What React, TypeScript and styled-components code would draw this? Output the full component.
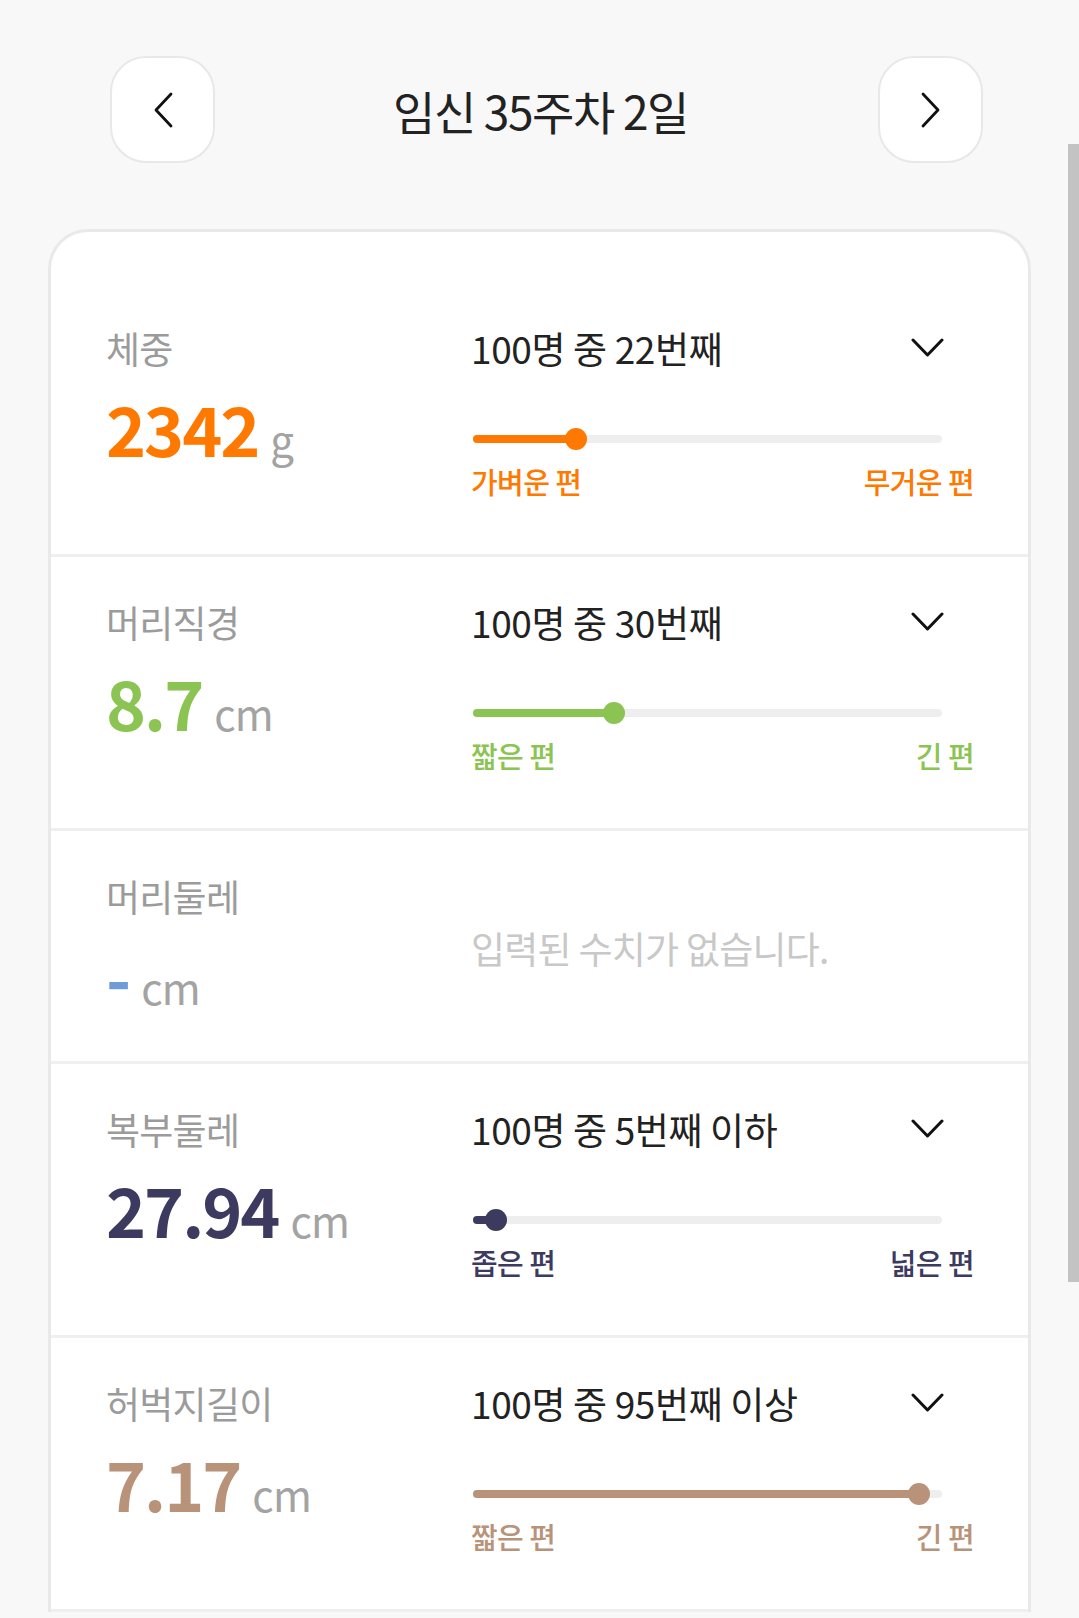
import React from 'react';
import styled, { createGlobalStyle } from 'styled-components';

const GlobalStyle = createGlobalStyle`
  html, body {
    margin: 0;
    padding: 0;
    overflow: hidden;
    background-color: #f8f8f8;
  }
  body {
    font-family: "Noto Sans CJK KR", "Noto Sans", sans-serif;
    color: #222;
  }
  * {
    box-sizing: border-box;
  }
`;

const Page = styled.div`
  min-height: 100vh;
  background-color: #f8f8f8;
  padding-top: 56px;
`;

const Header = styled.header`
  display: grid;
  grid-template-columns: 105px 1fr 105px;
  align-items: center;
  padding: 0 96px 0 110px;
`;

const NavButton = styled.button`
  width: 105px;
  height: 107px;
  border: 2px solid #e8e8e8;
  border-radius: 36px;
  background-color: #fff;
  display: flex;
  align-items: center;
  justify-content: center;
  padding: 0;
  cursor: pointer;
`;

const Title = styled.h1`
  margin: 0;
  padding-right: 12px;
  text-align: center;
  font-size: 46px;
  font-weight: 400;
  letter-spacing: -0.03em;
  line-height: 60px;
  color: #222;
`;

const Card = styled.section`
  margin: 66px 48px 0 48px;
  background-color: #fff;
  border: 3px solid #e9e9e9;
  border-bottom: none;
  border-radius: 40px 40px 0 0;
  padding-top: 51px;
`;

const Row = styled.div`
  display: grid;
  grid-template-columns: 365px 1fr;
  padding: 40px 54px 51px 55px;
  border-bottom: 3px solid #efefef;
`;

const LeftCol = styled.div`
  display: flex;
  flex-direction: column;
`;

const RightCol = styled.div`
  display: flex;
  flex-direction: column;
`;

const Label = styled.div`
  font-size: 37px;
  line-height: 50px;
  letter-spacing: -0.02em;
  color: #9b9b9b;
`;

const ValueLine = styled.div`
  margin-top: 21px;
  height: 68px;
  display: flex;
  align-items: baseline;
  white-space: nowrap;
`;

const Value = styled.span<{ $color: string }>`
  font-size: 68px;
  line-height: 68px;
  font-weight: 700;
  letter-spacing: -0.03em;
  color: ${p => p.$color};
`;

const Unit = styled.span`
  margin-left: 12px;
  font-size: 42px;
  line-height: 42px;
  font-weight: 400;
  letter-spacing: -0.02em;
  color: #a3a3a3;
`;

const RankHeader = styled.div`
  display: flex;
  align-items: center;
  justify-content: space-between;
  padding-right: 30px;
  height: 50px;
`;

const RankText = styled.span`
  font-size: 37px;
  line-height: 50px;
  letter-spacing: -0.01em;
  color: #222;
`;

const Track = styled.div`
  position: relative;
  margin: 55px 32px 0 2px;
  height: 22px;
  display: flex;
  align-items: center;
`;

const TrackBar = styled.div`
  width: 100%;
  height: 8px;
  border-radius: 4px;
  background-color: #eeeeee;
`;

const TrackFill = styled.div<{ $color: string }>`
  position: absolute;
  left: 0;
  top: 7px;
  height: 8px;
  border-radius: 4px;
  background-color: ${p => p.$color};
`;

const Thumb = styled.div<{ $color: string }>`
  position: absolute;
  top: 0;
  width: 22px;
  height: 22px;
  margin-left: -11px;
  border-radius: 50%;
  background-color: ${p => p.$color};
`;

const RangeLabels = styled.div<{ $color: string }>`
  margin-top: 13px;
  padding-bottom: 4px;
  display: flex;
  justify-content: space-between;
  font-size: 29px;
  line-height: 36px;
  font-weight: 500;
  letter-spacing: -0.02em;
  color: ${p => p.$color};
`;

const EmptyText = styled.div`
  margin-top: 52px;
  font-size: 37px;
  line-height: 50px;
  letter-spacing: -0.02em;
  color: #c8c8c8;
`;

const ScrollThumb = styled.div`
  position: fixed;
  top: 144px;
  right: 0;
  width: 11px;
  height: 1138px;
  background-color: #c3c3c3;
`;

const ChevronLeft = () => (
  <svg width="22" height="36" viewBox="0 0 22 36" fill="none">
    <path d="M19 2 L4 18 L19 34" stroke="#111" strokeWidth="2.8" strokeLinecap="round" strokeLinejoin="round" />
  </svg>
);

const ChevronRight = () => (
  <svg width="22" height="36" viewBox="0 0 22 36" fill="none">
    <path d="M3 2 L18 18 L3 34" stroke="#111" strokeWidth="2.8" strokeLinecap="round" strokeLinejoin="round" />
  </svg>
);

const ChevronDown = () => (
  <svg width="33" height="20" viewBox="0 0 33 20" fill="none">
    <path d="M2 2 L16.5 17 L31 2" stroke="#111" strokeWidth="3" strokeLinecap="round" strokeLinejoin="round" />
  </svg>
);

type Measure = {
  label: string;
  value: string;
  unit: string;
  color: string;
  rank?: string;
  percent?: number;
  min?: string;
  max?: string;
};

const measures: Measure[] = [
  { label: '체중', value: '2342', unit: 'g', color: '#ff7800', rank: '100명 중 22번째', percent: 22, min: '가벼운 편', max: '무거운 편' },
  { label: '머리직경', value: '8.7', unit: 'cm', color: '#8cc453', rank: '100명 중 30번째', percent: 30, min: '짧은 편', max: '긴 편' },
  { label: '머리둘레', value: '-', unit: 'cm', color: '#6f9bdb' },
  { label: '복부둘레', value: '27.94', unit: 'cm', color: '#3c3a5e', rank: '100명 중 5번째 이하', percent: 5, min: '좁은 편', max: '넓은 편' },
  { label: '허벅지길이', value: '7.17', unit: 'cm', color: '#b8937a', rank: '100명 중 95번째 이상', percent: 95, min: '짧은 편', max: '긴 편' },
];

const MeasureRow: React.FC<{ m: Measure }> = ({ m }) => (
  <Row>
    <LeftCol>
      <Label>{m.label}</Label>
      <ValueLine>
        <Value $color={m.color}>{m.value}</Value>
        <Unit>{m.unit}</Unit>
      </ValueLine>
    </LeftCol>
    <RightCol>
      {m.rank ? (
        <>
          <RankHeader>
            <RankText>{m.rank}</RankText>
            <ChevronDown />
          </RankHeader>
          <Track>
            <TrackBar />
            <TrackFill $color={m.color} style={{ width: `${m.percent}%` }} />
            <Thumb $color={m.color} style={{ left: `${m.percent}%` }} />
          </Track>
          <RangeLabels $color={m.color}>
            <span>{m.min}</span>
            <span>{m.max}</span>
          </RangeLabels>
        </>
      ) : (
        <EmptyText>입력된 수치가 없습니다.</EmptyText>
      )}
    </RightCol>
  </Row>
);

const App: React.FC = () => {
  return (
    <Page>
      <GlobalStyle />
      <Header>
        <NavButton type="button" aria-label="이전">
          <ChevronLeft />
        </NavButton>
        <Title>임신 35주차 2일</Title>
        <NavButton type="button" aria-label="다음">
          <ChevronRight />
        </NavButton>
      </Header>
      <Card>
        {measures.map(m => (
          <MeasureRow key={m.label} m={m} />
        ))}
      </Card>
      <ScrollThumb />
    </Page>
  );
};

export default App;
